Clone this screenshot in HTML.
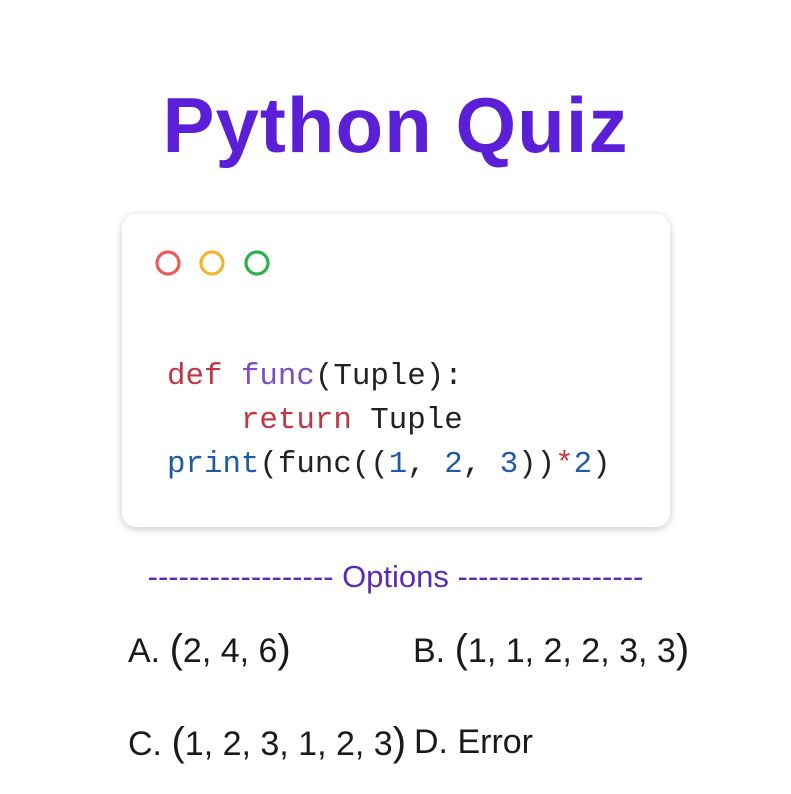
<!DOCTYPE html>
<html><head><meta charset="utf-8"><style>
body{margin:0;width:791px;height:794px;background:#fff;position:relative;overflow:hidden;font-family:"Liberation Sans",sans-serif}
.a{position:absolute;white-space:pre}
.title{left:0;width:791px;text-align:center;top:86px;font-size:78px;line-height:78px;font-weight:bold;color:#5a1fd6;letter-spacing:1px}
.card{position:absolute;left:122px;top:214px;width:548px;height:313px;border-radius:14px;background:#fff;box-shadow:0 2px 8px rgba(0,0,0,.22)}
.code{left:167px;top:355px;font-family:"Liberation Mono","DejaVu Sans Mono",monospace;font-size:30.8px;line-height:44px;color:#222}
.r{color:#c23645}.p{color:#7a4fc4}.b{color:#1d5ba6}
.opt{left:0;width:791px;text-align:center;top:561px;font-size:31px;line-height:31px;color:#5a2bb8}
.o{font-size:34px;line-height:34px;color:#1a1a1a}
.o span{font-size:40px;font-weight:300}
</style></head><body>
<div class="a title">Python Quiz</div>
<div class="card"></div>
<svg class="a" style="left:0;top:0" width="791" height="400">
<circle cx="168" cy="263" r="11" fill="none" stroke="#ea5c5c" stroke-width="3.2"/>
<circle cx="212" cy="263" r="11" fill="none" stroke="#f2b52e" stroke-width="3.2"/>
<circle cx="257" cy="263" r="11" fill="none" stroke="#2bb24a" stroke-width="3.2"/>
</svg>
<div class="a code"><span class="r">def</span> <span class="p">func</span>(Tuple):
    <span class="r">return</span> Tuple
<span class="b">print</span>(func((<span class="b">1</span>, <span class="b">2</span>, <span class="b">3</span>))<span class="r">*</span><span class="b">2</span>)</div>
<div class="a opt">------------------ Options ------------------</div>
<div class="a o" style="left:128px;top:632px">A. <span>(</span>2, 4, 6<span>)</span></div>
<div class="a o" style="left:413px;top:632px">B. <span>(</span>1, 1, 2, 2, 3, 3<span>)</span></div>
<div class="a o" style="left:128px;top:725px">C. <span>(</span>1, 2, 3, 1, 2, 3<span>)</span></div>
<div class="a o" style="left:414px;top:725px">D. Error</div>
</body></html>
